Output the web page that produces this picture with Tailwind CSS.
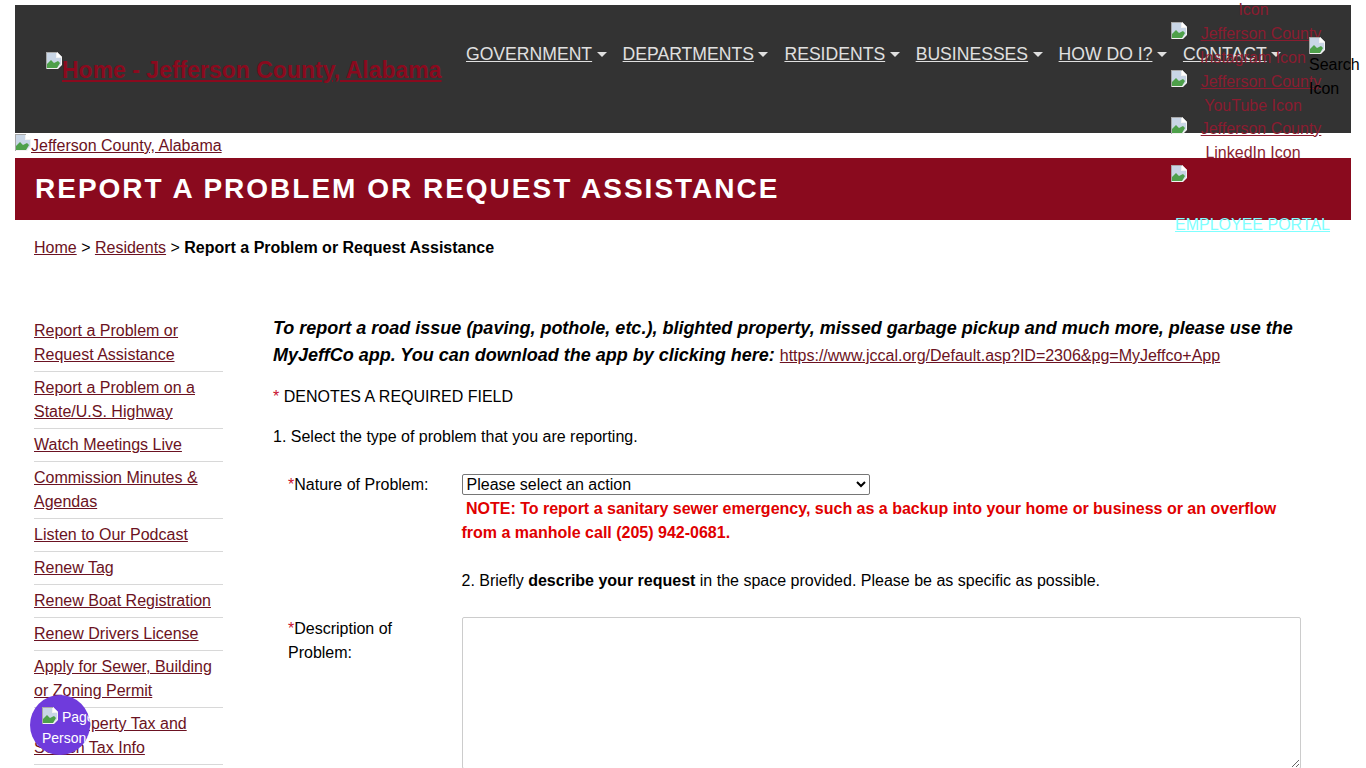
<!DOCTYPE html>
<html lang="en">
<head>
    <meta charset="UTF-8">
    <meta name="viewport" content="width=device-width, initial-scale=1.0">
    <title>Report a Problem or Request Assistance</title>
    <script src="https://cdn.jsdelivr.net/npm/@tailwindcss/browser@4"></script>
</head>
<body class="bg-white h-screen overflow-hidden relative font-['Liberation_Sans',Arial,sans-serif] text-[16px] leading-[24px] text-black">

    <svg class="hidden">
        <symbol id="broken" viewBox="0 0 16 17">
            <path d="M0 0h11l5 5v8l-4 4H0z" fill="#f2f2f2"/>
            <path d="M11 0v5h5z" fill="#ffffff"/>
            <path d="M1 1h9v5h5v6l-4 4H1z" fill="#c9d6e6"/>
            <path d="M1 16v-4l4-4 3 3 4-2 2 2-3 5z" fill="#4ea04a"/>
            <path d="M0 0v17h1V1h10V0z" fill="#a8a8a8"/>
        </symbol>
    </svg>

    <div class="px-[15px] pt-[5px]">
        <!-- Header -->
        <header class="bg-[#333333] h-[128px] flex items-start">
            <a href="#" class="ml-[31px] mt-[47px] w-[420px] shrink-0 flex items-start font-bold text-[23px] leading-[34px] text-[#8a0a1e] underline whitespace-nowrap">
                <svg class="w-4 h-[17px] shrink-0"><use href="#broken"/></svg>
                <span class="mt-[1px]">Home - Jefferson County, Alabama</span>
            </a>
            <nav class="mt-[37px] flex text-[17.6px] text-[#e0e0e0] whitespace-nowrap">
                <a href="#" class="flex items-center mr-[16px]"><span class="underline">GOVERNMENT</span><i class="ml-[4.5px] mt-[1px] border-x-[5.28px] border-x-transparent border-t-[5.28px] border-t-[#e0e0e0]"></i></a>
                <a href="#" class="flex items-center mr-[16px]"><span class="underline">DEPARTMENTS</span><i class="ml-[4.5px] mt-[1px] border-x-[5.28px] border-x-transparent border-t-[5.28px] border-t-[#e0e0e0]"></i></a>
                <a href="#" class="flex items-center mr-[16px]"><span class="underline">RESIDENTS</span><i class="ml-[4.5px] mt-[1px] border-x-[5.28px] border-x-transparent border-t-[5.28px] border-t-[#e0e0e0]"></i></a>
                <a href="#" class="flex items-center mr-[16px]"><span class="underline">BUSINESSES</span><i class="ml-[4.5px] mt-[1px] border-x-[5.28px] border-x-transparent border-t-[5.28px] border-t-[#e0e0e0]"></i></a>
                <a href="#" class="flex items-center mr-[16px]"><span class="underline">HOW DO I?</span><i class="ml-[4.5px] mt-[1px] border-x-[5.28px] border-x-transparent border-t-[5.28px] border-t-[#e0e0e0]"></i></a>
                <a href="#" class="flex items-center"><span class="underline">CONTACT</span><i class="ml-[4.5px] mt-[1px] border-x-[5.28px] border-x-transparent border-t-[5.28px] border-t-[#e0e0e0]"></i></a>
            </nav>
        </header>

        <a href="#" class="flex h-[25px] pt-[1px] items-start text-[#6b1222] underline">
            <svg class="w-4 h-[17px] shrink-0"><use href="#broken"/></svg>
            <span>Jefferson County, Alabama</span>
        </a>

        <div class="bg-[#8a0a1e] h-[62px] pl-[20px] flex items-center">
            <h1 class="text-white font-bold text-[28px] tracking-[2px]">REPORT A PROBLEM OR REQUEST ASSISTANCE</h1>
        </div>

        <div class="pl-[19px] pt-[16px] h-[99px]">
            <a href="#" class="text-[#6b1222] underline">Home</a> &gt;
            <a href="#" class="text-[#6b1222] underline">Residents</a> &gt;
            <b>Report a Problem or Request Assistance</b>
        </div>

        <div class="flex items-start">
            <!-- Sidebar -->
            <ul class="ml-[19px] w-[189px] shrink-0 text-[#6b1222] underline">
                <li class="pb-[4px] mb-[4px] border-b border-[#d8d8d8]"><a href="#">Report a Problem or<br>Request Assistance</a></li>
                <li class="pb-[4px] mb-[4px] border-b border-[#d8d8d8]"><a href="#">Report a Problem on a<br>State/U.S. Highway</a></li>
                <li class="pb-[4px] mb-[4px] border-b border-[#d8d8d8]"><a href="#">Watch Meetings Live</a></li>
                <li class="pb-[4px] mb-[4px] border-b border-[#d8d8d8]"><a href="#">Commission Minutes &amp;<br>Agendas</a></li>
                <li class="pb-[4px] mb-[4px] border-b border-[#d8d8d8]"><a href="#">Listen to Our Podcast</a></li>
                <li class="pb-[4px] mb-[4px] border-b border-[#d8d8d8]"><a href="#">Renew Tag</a></li>
                <li class="pb-[4px] mb-[4px] border-b border-[#d8d8d8]"><a href="#">Renew Boat Registration</a></li>
                <li class="pb-[4px] mb-[4px] border-b border-[#d8d8d8]"><a href="#">Renew Drivers License</a></li>
                <li class="pb-[4px] mb-[4px] border-b border-[#d8d8d8]"><a href="#">Apply for Sewer, Building<br>or Zoning Permit</a></li>
                <li class="pb-[4px] mb-[4px] border-b border-[#d8d8d8]"><a href="#">Pay Property Tax and<br>Search Tax Info</a></li>
            </ul>

            <!-- Main -->
            <main class="ml-[50px] w-[1028px]">
                <p class="-mt-[4px] font-bold italic text-[18px] leading-[27px]">To report a road issue (paving, pothole, etc.), blighted property, missed garbage pickup and much more, please use the MyJeffCo app. You can download the app by clicking here: <a href="#" class="font-normal not-italic text-[16px] text-[#6b1222] underline">https://www.jccal.org/Default.asp?ID=2306&amp;pg=MyJeffco+App</a></p>
                <p class="mt-[16px]"><span class="text-[#c8102e]">*</span> DENOTES A REQUIRED FIELD</p>
                <p class="mt-[16px]">1. Select the type of problem that you are reporting.</p>

                <div class="flex mt-[25px]">
                    <label class="ml-[15px] -mt-[1px] w-[173.5px] shrink-0"><span class="text-[#c8102e]">*</span>Nature of Problem:</label>
                    <div class="w-[840px]">
                        <select class="block w-[408px] h-[21px] bg-white border border-[#767676] rounded-[2px] text-[16px] leading-[19px] text-black appearance-auto">
                            <option>Please select an action</option>
                        </select>
                        <p class="mt-[2px] font-bold text-[#e00000]">&nbsp;NOTE: To report a sanitary sewer emergency, such as a backup into your home or business or an overflow from a manhole call (205) 942-0681.</p>
                        <p class="mt-[24px]">2. Briefly <b>describe your request</b> in the space provided. Please be as specific as possible.</p>
                    </div>
                </div>

                <div class="flex mt-[24px]">
                    <label class="ml-[15px] w-[173.5px] shrink-0 pr-[20px]"><span class="text-[#c8102e]">*</span>Description of Problem:</label>
                    <textarea class="block w-[840px] h-[152px] bg-white border border-[#cccccc] rounded-[2px]"></textarea>
                </div>
            </main>
        </div>
    </div>

    <!-- Social links spilling out of the header -->
    <div class="absolute left-[1171px] top-[-2px] w-[164px] text-[#8a1c30]">
        <div class="h-[24px] text-center pl-[1px]">Icon</div>
        <div class="h-[47.5px] flex items-start"><svg class="w-4 h-[17px] shrink-0"><use href="#broken"/></svg><div class="flex-1 text-center"><span class="underline">Jefferson County</span><br><span class="inline-block mr-[16px]">Instagram Icon</span></div></div>
        <div class="h-[47.5px] flex items-start"><svg class="w-4 h-[17px] shrink-0"><use href="#broken"/></svg><div class="flex-1 text-center"><span class="underline">Jefferson County</span><br><span class="inline-block mr-[16px]">YouTube Icon</span></div></div>
        <div class="h-[47.5px] flex items-start"><svg class="w-4 h-[17px] shrink-0"><use href="#broken"/></svg><div class="flex-1 text-center"><span class="underline">Jefferson County</span><br><span class="inline-block mr-[16px]">LinkedIn Icon</span></div></div>
        <svg class="w-4 h-[17px]"><use href="#broken"/></svg>
        <a href="#" class="block mt-[31px] ml-[4px] underline text-[#7fffff] whitespace-nowrap">EMPLOYEE PORTAL</a>
    </div>

    <!-- Search -->
    <div class="absolute left-[1309px] top-[37px] w-[50px]">
        <svg class="w-4 h-[17px]"><use href="#broken"/></svg>
        <div class="-mt-[1px]">Search<br>Icon</div>
    </div>

    <!-- Floating button -->
    <div class="absolute left-[30px] top-[695px] w-[60px] h-[60px] rounded-full bg-[#6f3bdc] overflow-hidden text-white text-[14px] leading-[21px] pt-[12px] pl-[12px] whitespace-nowrap">
        <svg class="w-4 h-[17px] inline-block align-[-2px]"><use href="#broken"/></svg> Page<br>Personalize
    </div>

</body>
</html>
